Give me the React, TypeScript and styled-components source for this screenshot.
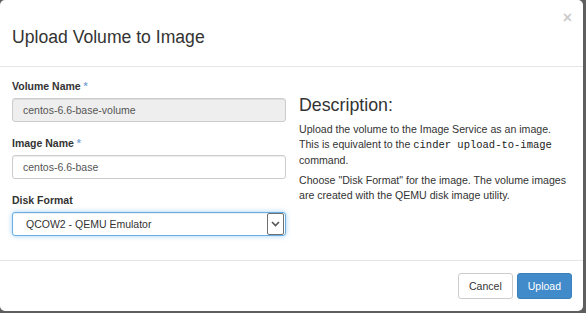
import React from "react";
import styled, { createGlobalStyle } from "styled-components";

const GlobalStyle = createGlobalStyle`
  html, body {
    margin: 0;
    padding: 0;
    background: #5e5e5e;
    font-family: "Liberation Sans", Arial, sans-serif;
    color: #333;
  }
`;

const Modal = styled.div`
  width: 583px;
  height: 311px;
  background: #fff;
  border-radius: 5px;
  box-sizing: border-box;
  display: flex;
  flex-direction: column;
  overflow: hidden;
`;

const Header = styled.div`
  position: relative;
  height: 67px;
  box-sizing: border-box;
  padding: 27px 12px 0;
  border-bottom: 1px solid #e5e5e5;
`;

const Title = styled.h3`
  margin: 0;
  font-size: 17.6px;
  line-height: 20px;
  font-weight: normal;
  color: #333;
`;

const Close = styled.button`
  position: absolute;
  top: 10px;
  right: 11px;
  border: 0;
  background: none;
  padding: 0;
  font-family: "Liberation Sans", Arial, sans-serif;
  font-size: 16px;
  font-weight: bold;
  line-height: 16px;
  color: #000;
  opacity: 0.2;
  cursor: pointer;
`;

const Body = styled.div`
  height: 193px;
  box-sizing: border-box;
  padding: 12px 12px 0;
  display: grid;
  grid-template-columns: 274px 1fr;
  column-gap: 13px;
`;

const Column = styled.div`
  display: flex;
  flex-direction: column;
`;

const Group = styled.div`
  display: flex;
  flex-direction: column;
  margin-bottom: 14px;
`;

const Label = styled.label`
  font-size: 10.5px;
  line-height: 15px;
  font-weight: bold;
  color: #333;
  margin-bottom: 4px;
`;

const Required = styled.span`
  color: #7fa9d4;
  font-weight: bold;
`;

const Input = styled.div<{ $disabled?: boolean }>`
  height: 24px;
  box-sizing: border-box;
  padding: 0 10px;
  display: flex;
  align-items: center;
  font-size: 10.5px;
  color: #555;
  border: 1px solid #ccc;
  border-radius: 3px;
  background: ${({ $disabled }) => ($disabled ? "#eee" : "#fff")};
  box-shadow: inset 0 1px 1px rgba(0, 0, 0, 0.075);
`;

const Select = styled.div`
  height: 24px;
  box-sizing: border-box;
  padding: 0 1px 0 13px;
  display: flex;
  align-items: center;
  font-size: 10.5px;
  color: #333;
  border: 1px solid #66afe9;
  border-radius: 3px;
  background: #fff;
  box-shadow: inset 0 1px 1px rgba(0, 0, 0, 0.075), 0 0 5px rgba(102, 175, 233, 0.6);
`;

const SelectText = styled.span`
  flex: 1;
`;

const ArrowBox = styled.span`
  width: 17px;
  height: 22px;
  box-sizing: border-box;
  border: 1px solid #707070;
  border-radius: 2px;
  display: flex;
  align-items: center;
  justify-content: center;
  background: #fff;
`;

const Heading = styled.h3`
  margin: 16px 0 7px;
  font-size: 17.8px;
  line-height: 20px;
  font-weight: normal;
  color: #333;
`;

const Para = styled.p`
  margin: 0 0 5px;
  font-size: 10.6px;
  line-height: 15px;
  color: #333;
`;

const Code = styled.code`
  display: inline-block;
  line-height: 15px;
  font-family: "Liberation Mono", "Courier New", monospace;
  font-size: 10.5px;
  color: #222;
`;

const Footer = styled.div`
  flex: 1;
  border-top: 1px solid #e5e5e5;
  padding: 12px 11px 0;
  display: flex;
  justify-content: flex-end;
  align-items: flex-start;
  gap: 4px;
`;

const Button = styled.button<{ $primary?: boolean }>`
  height: 26px;
  padding: 0 10px;
  font-family: "Liberation Sans", Arial, sans-serif;
  font-size: 10.5px;
  border-radius: 3px;
  border: 1px solid ${({ $primary }) => ($primary ? "#3a80bd" : "#ccc")};
  background: ${({ $primary }) => ($primary ? "#428bca" : "#fff")};
  color: ${({ $primary }) => ($primary ? "#fff" : "#333")};
  cursor: pointer;
`;

const Chevron = () => (
  <svg width="9" height="6" viewBox="0 0 9 6">
    <path d="M1 1 L4.5 4.5 L8 1" fill="none" stroke="#555" strokeWidth="1.6" />
  </svg>
);

export default function App() {
  return (
    <>
      <GlobalStyle />
      <Modal>
        <Header>
          <Title>Upload Volume to Image</Title>
          <Close aria-label="Close">×</Close>
        </Header>
        <Body>
          <Column>
            <Group>
              <Label>
                Volume Name <Required>*</Required>
              </Label>
              <Input $disabled>centos-6.6-base-volume</Input>
            </Group>
            <Group>
              <Label>
                Image Name <Required>*</Required>
              </Label>
              <Input>centos-6.6-base</Input>
            </Group>
            <Group>
              <Label>Disk Format</Label>
              <Select>
                <SelectText>QCOW2 - QEMU Emulator</SelectText>
                <ArrowBox>
                  <Chevron />
                </ArrowBox>
              </Select>
            </Group>
          </Column>
          <Column>
            <Heading>Description:</Heading>
            <Para>
              Upload the volume to the Image Service as an image. This is equivalent to the{" "}
              <Code>cinder upload-to-image</Code> command.
            </Para>
            <Para>
              Choose "Disk Format" for the image. The volume images are created with the QEMU disk
              image utility.
            </Para>
          </Column>
        </Body>
        <Footer>
          <Button>Cancel</Button>
          <Button $primary>Upload</Button>
        </Footer>
      </Modal>
    </>
  );
}
